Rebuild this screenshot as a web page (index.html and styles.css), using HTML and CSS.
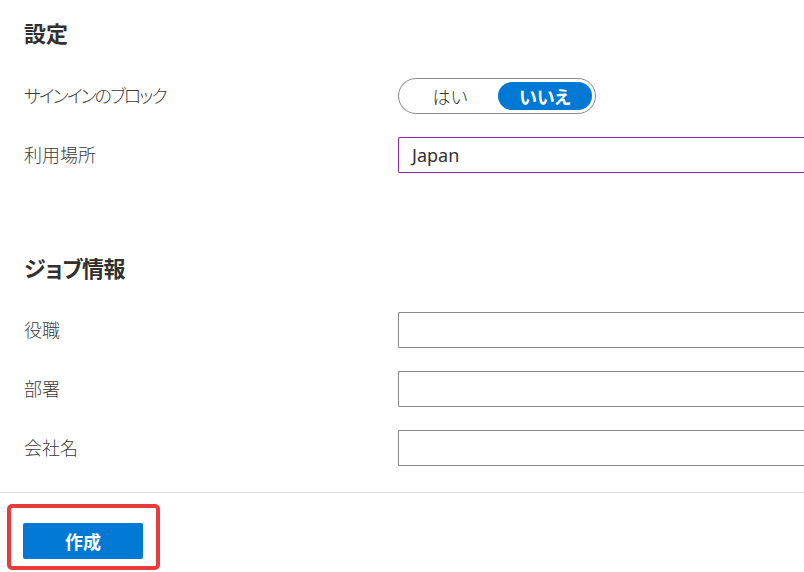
FILE: index.html
```html
<!DOCTYPE html>
<html lang="ja">
<head>
<meta charset="utf-8">
<link rel="stylesheet" href="styles.css">
</head>
<body>
<div class="page">
  <div class="content">
    <h2 class="heading heading-first">設定</h2>
    <div class="row row-toggle">
      <div class="label label-tight">サインインのブロック</div>
      <div class="control">
        <div class="toggle">
          <span class="opt">はい</span>
          <span class="opt opt-on">いいえ</span>
        </div>
      </div>
    </div>
    <div class="row row-loc">
      <div class="label">利用場所</div>
      <div class="control">
        <div class="input input-focus">Japan</div>
      </div>
    </div>

    <h2 class="heading heading-second">ジョブ情報</h2>
    <div class="row row-job">
      <div class="label">役職</div>
      <div class="control"><div class="input"></div></div>
    </div>
    <div class="row row-job">
      <div class="label">部署</div>
      <div class="control"><div class="input"></div></div>
    </div>
    <div class="row row-job">
      <div class="label">会社名</div>
      <div class="control"><div class="input"></div></div>
    </div>
  </div>
  <div class="footer">
    <div class="highlight">
      <button class="btn-primary">作成</button>
    </div>
  </div>
</div>
</body>
</html>
```

FILE: styles.css
```css
html, body {
  margin: 0;
  padding: 0;
  background: #ffffff;
  overflow: hidden;
}
body {
  width: 804px;
  height: 572px;
  font-family: "Noto Sans", "Noto Sans CJK JP", sans-serif;
  font-feature-settings: "palt";
  color: #323130;
}
.page {
  display: flex;
  flex-direction: column;
}
.content {
  padding: 0 0 26px 24px;
}
.heading {
  margin: 0;
  font-size: 22px;
  line-height: 32px;
  font-weight: 700;
  color: #323130;
}
.heading-first {
  margin-top: 17px;
  margin-bottom: 29px;
}
.heading-second {
  margin-top: 79px;
  margin-bottom: 28px;
  letter-spacing: -0.5px;
}
.row {
  display: grid;
  grid-template-columns: 374px 1fr;
  align-items: center;
  height: 36px;
}
.row-loc {
  margin-top: 23px;
}
.row-job + .row-job {
  margin-top: 23px;
}
.label {
  font-size: 18px;
  font-weight: 300;
  color: #3b3a39;
  line-height: 24px;
}
.label-tight {
  letter-spacing: -2px;
}
.control {
  min-width: 0;
}
.toggle {
  box-sizing: border-box;
  width: 198px;
  height: 36px;
  border: 1px solid #8a8886;
  border-radius: 18px;
  padding: 3px;
  display: grid;
  grid-template-columns: 1fr 94px;
}
.opt {
  display: flex;
  align-items: center;
  justify-content: center;
  height: 28px;
  font-size: 18px;
  font-weight: 300;
  color: #323130;
  border-radius: 14px;
}
.opt-on {
  background: #0078d4;
  color: #ffffff;
  font-weight: 700;
}
.input {
  box-sizing: border-box;
  height: 36px;
  width: 100%;
  border: 1px solid #8a8886;
  border-right: none;
  border-radius: 2px 0 0 2px;
  padding: 0 13px;
  display: flex;
  align-items: center;
  font-size: 18px;
  color: #323130;
}
.input-focus {
  border-color: #8a2da5;
}
.footer {
  border-top: 1px solid #e1dfdd;
  padding: 11px 0 0 7px;
}
.highlight {
  box-sizing: border-box;
  width: 153px;
  height: 66px;
  border: 4px solid #e83b3b;
  border-radius: 5px;
  padding: 15px 0 0 12px;
}
.btn-primary {
  display: block;
  width: 120px;
  height: 36px;
  border: none;
  border-radius: 2px;
  background: #0078d4;
  color: #ffffff;
  font-family: "Noto Sans", "Noto Sans CJK JP", sans-serif;
  font-size: 18px;
  font-weight: 700;
  padding: 0;
}
```
